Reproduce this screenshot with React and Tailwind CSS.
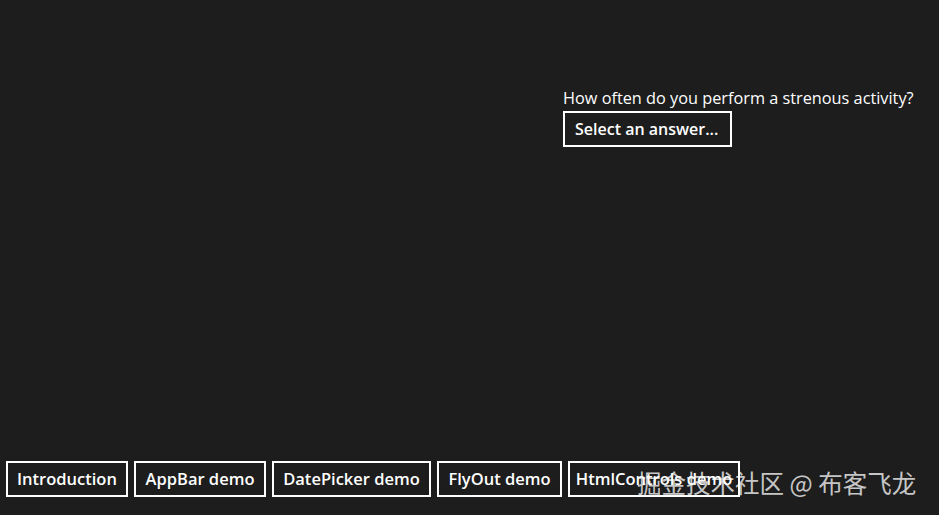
import React from "react";

const tabs = [
  { label: "Introduction", w: "w-[122px]" },
  { label: "AppBar demo", w: "w-[132px]" },
  { label: "DatePicker demo", w: "w-[159px]" },
  { label: "FlyOut demo", w: "w-[125px]" },
  { label: "HtmlControls demo", w: "w-[172px]" },
];

export default function App() {
  return (
    <div
      className="relative flex h-[515px] w-full flex-col overflow-hidden bg-[#1d1d1d] text-white"
      style={{ fontFamily: '"Open Sans", "Noto Sans", sans-serif' }}
    >
      <div className="pl-[563px] pt-[88px]">
        <div className="text-[16.3px] leading-[20px]">How often do you perform a strenous activity?</div>
        <button className="mt-[3px] h-[36px] w-[169px] border-2 border-white bg-[#1d1d1d] pl-[10px] text-left text-[16px] font-semibold text-white">
          Select an answer...
        </button>
      </div>

      <div className="mt-auto flex gap-[6px] pb-[18px] pl-[6px]">
        {tabs.map((t) => (
          <button
            key={t.label}
            className={`h-[36px] ${t.w} whitespace-nowrap border-2 border-white bg-[#1d1d1d] text-center text-[16.5px] font-semibold text-white`}
          >
            {t.label}
          </button>
        ))}
      </div>

      {/* watermark overlay */}
      <div
        className="absolute left-[637px] top-[466px] whitespace-nowrap text-[24.5px] leading-[34px] text-white/75"
        style={{ fontFamily: '"Noto Sans CJK SC", "Noto Sans", sans-serif' }}
      >
        掘金技术社区 @ 布客飞龙
      </div>
    </div>
  );
}
